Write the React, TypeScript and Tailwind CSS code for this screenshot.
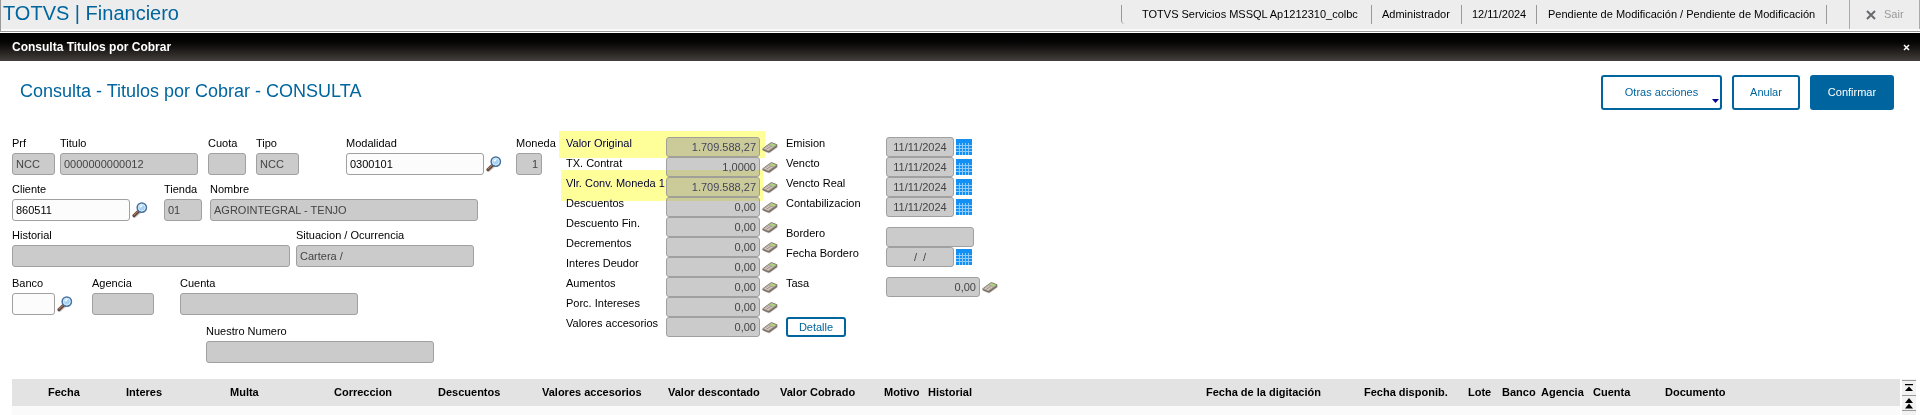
import { useId } from 'react';

const columns = [
  { label: '', width: 'w-[36px]' },
  { label: 'Fecha', width: 'w-[78px]' },
  { label: 'Interes', width: 'w-[104px]' },
  { label: 'Multa', width: 'w-[104px]' },
  { label: 'Correccion', width: 'w-[104px]' },
  { label: 'Descuentos', width: 'w-[104px]' },
  { label: 'Valores accesorios', width: 'w-[126px]' },
  { label: 'Valor descontado', width: 'w-[112px]' },
  { label: 'Valor Cobrado', width: 'w-[104px]' },
  { label: 'Motivo', width: 'w-[44px]' },
  { label: 'Historial', width: 'w-[278px]' },
  { label: 'Fecha de la digitación', width: 'w-[158px]' },
  { label: 'Fecha disponib.', width: 'w-[104px]' },
  { label: 'Lote', width: 'w-[34px]' },
  { label: 'Banco', width: 'w-[39px]' },
  { label: 'Agencia', width: 'w-[52px]' },
  { label: 'Cuenta', width: 'w-[72px]' },
  { label: 'Documento', width: '' },
];

const amounts = [
  { label: 'Valor Original', value: '1.709.588,27', mark: '-left-[7px] -top-[6px] h-[27px] w-[206px]' },
  { label: 'TX. Contrat', value: '1,0000' },
  { label: 'Vlr. Conv. Moneda 1', value: '1.709.588,27', mark: '-left-[5px] -top-[7px] h-[31px] w-[202px]' },
  { label: 'Descuentos', value: '0,00' },
  { label: 'Descuento Fin.', value: '0,00' },
  { label: 'Decrementos', value: '0,00' },
  { label: 'Interes Deudor', value: '0,00' },
  { label: 'Aumentos', value: '0,00' },
  { label: 'Porc. Intereses', value: '0,00' },
  { label: 'Valores accesorios', value: '0,00' },
];

const dates = ['Emision', 'Vencto', 'Vencto Real', 'Contabilizacion'];

function SearchIcon() {
  return (
    <svg width="16" height="16" viewBox="0 0 16 16" aria-hidden="true">
      <path d="M2.4 15.2 8 10.8" stroke="#d0d0d0" strokeWidth="2" strokeLinecap="round" />
      <path d="M2 13.6 6.4 9.4" stroke="#5c4038" strokeWidth="3.2" strokeLinecap="round" />
      <path d="M2 13 5.8 9.4" stroke="#a87a5c" strokeWidth="1.2" strokeLinecap="round" />
      <circle cx="9.8" cy="5.6" r="4.6" fill="#a5d3f5" stroke="#47719c" strokeWidth="1.6" />
      <circle cx="9.8" cy="5.6" r="3.4" fill="none" stroke="#d8ecfa" strokeWidth="1" />
      <path d="M7.6 5.4A2.5 2.5 0 0 1 10.8 3.2L9.4 5.2Z" fill="#fff" />
    </svg>
  );
}

function CalculatorIcon() {
  return (
    <svg width="16" height="14" viewBox="0 0 16 14" aria-hidden="true">
      <path d="M2 11.6 7.2 13.6 15.6 7.6V6Z" fill="#d2d0cd" />
      <path d="M.4 8.6 8.6 2.4q.6-.4 1.3-.1l5 2q.6.4.5 1.2l-.3 1.4-7.2 5.3q-.8.5-1.6.2L1 10.6q-.7-.3-.6-1Z" fill="#7a7068" />
      <path d="M1.2 8.4 8.9 3q.4-.2.9 0l4.4 1.8q.5.3.1.7L7 10.8q-.5.3-1 .1L1.2 9.1q-.4-.3 0-.7Z" fill="#b5aaa0" />
      <path d="M7.6 4.6 9.6 3.3 13.6 5 11.5 6.5Z" fill="#a8d870" />
      <path d="m3 8.2 3.8 1.6M4.6 7.1l3.8 1.6M6 6l3.8 1.6" stroke="#e4ddd4" strokeWidth=".8" />
      <path d="m4.4 9.2 4.4-3" stroke="#84796f" strokeWidth=".6" />
    </svg>
  );
}

function CalendarIcon() {
  return (
    <svg width="16" height="16" viewBox="0 0 16 16" aria-hidden="true" shapeRendering="crispEdges">
      <path fill="#1490f5" d="M0 0h16v16H0z" />
      <path d="M0 6.5h16M0 9.5h16M0 12.5h16M3.5 4v12M6.5 4v12M9.5 4v12M12.5 4v12" stroke="#8ccbfa" />
    </svg>
  );
}

type FieldProps = {
  label: string;
  value?: string;
  className: string;
  editable?: boolean;
  right?: boolean;
};

function Field({ label, value = '', className, editable, right }: FieldProps) {
  const id = useId();
  return (
    <div className={`flex shrink-0 flex-col ${className}`}>
      <label htmlFor={id} className="h-4 whitespace-nowrap leading-3">
        {label}
      </label>
      <div className="relative">
        <input
          id={id}
          defaultValue={value}
          readOnly={!editable}
          className={`block h-[22px] w-full rounded-[3px] border border-[#a0a0a0] px-[3px] ${
            editable ? 'bg-[#fcfcfc] text-black' : 'bg-[#cbcbcb] text-[#444]'
          } ${right ? 'text-right' : ''}`}
        />
        {editable && (
          <button type="button" aria-label={`Buscar ${label}`} className="absolute left-full top-[3px] ml-0.5">
            <SearchIcon />
          </button>
        )}
      </div>
    </div>
  );
}

type LineFieldProps = {
  label: string;
  value?: string;
  width: string;
  align?: string;
  icon?: 'calculator' | 'calendar';
  mark?: string;
};

function LineField({ label, value = '', width, align = 'text-right', icon, mark }: LineFieldProps) {
  const id = useId();
  return (
    <div className="relative flex h-5">
      <label htmlFor={id} className="w-[100px] shrink-0 whitespace-nowrap leading-3">
        {label}
      </label>
      <input
        id={id}
        readOnly
        defaultValue={value}
        className={`h-5 rounded-[3px] border border-[#a0a0a0] bg-[#cbcbcb] px-[3px] text-[#444] ${width} ${align}`}
      />
      {icon && (
        <button
          type="button"
          aria-label={icon === 'calendar' ? 'Calendario' : 'Calculadora'}
          className="ml-0.5 self-center"
        >
          {icon === 'calendar' ? <CalendarIcon /> : <CalculatorIcon />}
        </button>
      )}
      {mark && <span className={`pointer-events-none absolute z-10 bg-[#ffff99] mix-blend-darken ${mark}`} />}
    </div>
  );
}

export default function App() {
  return (
    <div className="overflow-hidden bg-white text-[11px] text-black [font-family:'Liberation_Sans',Arial,sans-serif]">
      {/* Top bar */}
      <header className="flex h-8 border-b border-l border-[#999] bg-[#ededed]">
        <div className="flex w-full justify-between border-b-2 border-[#fafafa]">
          <div className="pl-[2px] text-xl leading-[26px] text-[#00659e]">TOTVS | Financiero</div>
          <div className="flex">
            <div className="mt-[5px] flex h-[19px] leading-[15px]">
              <span className="w-[250px] whitespace-nowrap rounded-bl-sm border-l border-[#999] pl-5 pt-[2px]">
                TOTVS Servicios MSSQL Ap1212310_colbc
              </span>
              <span className="w-[90px] border-l border-[#999] pl-2.5 pt-[2px]">Administrador</span>
              <span className="w-[75px] border-l border-[#999] pl-2.5 pt-[2px]">12/11/2024</span>
              <span className="w-[291px] whitespace-nowrap border-x border-[#999] pl-[11px] pt-[2px]">
                Pendiente de Modificación / Pendiente de Modificación
              </span>
            </div>
            <button className="ml-[22px] flex w-[71px] items-center gap-2 border-x border-[#aaa] pl-4 text-[#999]">
              <svg width="10" height="10" viewBox="0 0 10 10" aria-hidden="true">
                <path d="m1 1 8 8M9 1 1 9" stroke="#666a70" strokeWidth="2" />
              </svg>
              Sair
            </button>
          </div>
        </div>
      </header>

      {/* Window title */}
      <div className="mt-px flex h-7 items-center justify-between bg-gradient-to-b from-black to-[#45403d] pl-3 pr-2.5 text-xs font-bold text-white">
        <h1>Consulta Titulos por Cobrar</h1>
        <button aria-label="Cerrar">
          <svg width="7" height="7" viewBox="0 0 7 7" aria-hidden="true">
            <path d="m1 1 5 5M6 1 1 6" stroke="#fff" strokeWidth="1.5" />
          </svg>
        </button>
      </div>

      <div className="flex justify-between pl-5 pr-[26px] pt-3.5">
        <h2 className="pt-1 text-lg leading-6 text-[#00659e]">Consulta - Titulos por Cobrar - CONSULTA</h2>
        <div className="flex gap-2.5 text-[#00659e]">
          <button className="relative h-[35px] w-[121px] rounded-[3px] border-2 border-[#00659e]">
            Otras acciones
            <svg className="absolute bottom-[5px] right-px" width="7" height="4" viewBox="0 0 7 4" aria-hidden="true">
              <path d="M0 0h7L3.5 4Z" fill="#000099" />
            </svg>
          </button>
          <button className="h-[35px] w-[68px] rounded-[3px] border-2 border-[#00659e]">Anular</button>
          <button className="h-[35px] w-[84px] rounded-[3px] bg-[#00659e] text-white">Confirmar</button>
        </div>
      </div>

      {/* Form */}
      <form className="flex pl-3 pt-[27px]">
        <div className="w-[554px] shrink-0">
          <div className="flex h-[46px]">
            <Field label="Prf" value="NCC" className="w-[43px]" />
            <Field label="Titulo" value="0000000000012" className="ml-[5px] w-[138px]" />
            <Field label="Cuota" className="ml-2.5 w-[38px]" />
            <Field label="Tipo" value="NCC" className="ml-2.5 w-[43px]" />
            <Field label="Modalidad" value="0300101" className="ml-[47px] w-[138px]" editable />
            <Field label="Moneda" value="1" className="ml-8 w-[26px]" right />
          </div>
          <div className="flex h-[46px]">
            <Field label="Cliente" value="860511" className="w-[118px]" editable />
            <Field label="Tienda" value="01" className="ml-[34px] w-[38px]" />
            <Field label="Nombre" value="AGROINTEGRAL - TENJO" className="ml-2 w-[268px]" />
          </div>
          <div className="flex h-12">
            <Field label="Historial" className="w-[278px]" />
            <Field label="Situacion / Ocurrencia" value="Cartera /" className="ml-1.5 w-[178px]" />
          </div>
          <div className="flex h-12">
            <Field label="Banco" className="w-[43px]" editable />
            <Field label="Agencia" className="ml-[37px] w-[62px]" />
            <Field label="Cuenta" className="ml-[26px] w-[178px]" />
          </div>
          <div className="flex">
            <Field label="Nuestro Numero" className="ml-[194px] w-[228px]" />
          </div>
        </div>

        <div className="w-[220px] shrink-0">
          {amounts.map((row) => (
            <LineField key={row.label} {...row} width="w-[94px]" icon="calculator" />
          ))}
        </div>

        <div>
          {dates.map((label) => (
            <LineField key={label} label={label} value="11/11/2024" width="w-[68px]" align="text-center" icon="calendar" />
          ))}
          <div className="mt-2.5">
            <LineField label="Bordero" width="w-[88px]" />
            <LineField label="Fecha Bordero" value="/  /" width="w-[68px]" align="text-center" icon="calendar" />
          </div>
          <div className="mt-2.5">
            <LineField label="Tasa" value="0,00" width="w-[94px]" icon="calculator" />
          </div>
          <button type="button" className="mt-5 block h-5 w-[60px] rounded-[3px] border-2 border-[#00659e] leading-4 text-[#00659e]">
            Detalle
          </button>
        </div>
      </form>

      {/* Movements */}
      <div className="mt-4 flex justify-between pl-3 pr-1">
        <div className="mr-0.5 h-9 grow bg-[#fafafa]">
          <table className="w-full table-fixed">
            <thead>
              <tr className="h-[27px] bg-[#e3e3e3] text-left">
                {columns.map((col) => (
                  <th key={col.label} className={`whitespace-nowrap p-0 ${col.width}`}>
                    {col.label}
                  </th>
                ))}
              </tr>
            </thead>
          </table>
        </div>
        <div className="flex h-9 w-[14px] shrink-0 flex-col overflow-hidden bg-[#f2f2f2] pt-px">
          <button aria-label="Primero" className="flex h-[15px] shrink-0 items-center justify-center border-t border-[#999]">
            <svg width="8" height="8" viewBox="0 0 8 8" aria-hidden="true">
              <path d="M0 0h8v1.2H0zM4 2.5 8 7H0Z" />
            </svg>
          </button>
          <button aria-label="Página anterior" className="flex h-[15px] shrink-0 items-center justify-center border-t border-[#999]">
            <svg width="8" height="11" viewBox="0 0 8 11" aria-hidden="true">
              <path d="m4 0 4 5H0ZM4 5.5l4 5H0Z" />
            </svg>
          </button>
          <button aria-label="Anterior" className="flex h-[15px] shrink-0 items-center justify-center border-t border-[#999]">
            <svg width="8" height="6" viewBox="0 0 8 6" aria-hidden="true">
              <path d="m4 0 4 5H0Z" />
            </svg>
          </button>
        </div>
      </div>
    </div>
  );
}
